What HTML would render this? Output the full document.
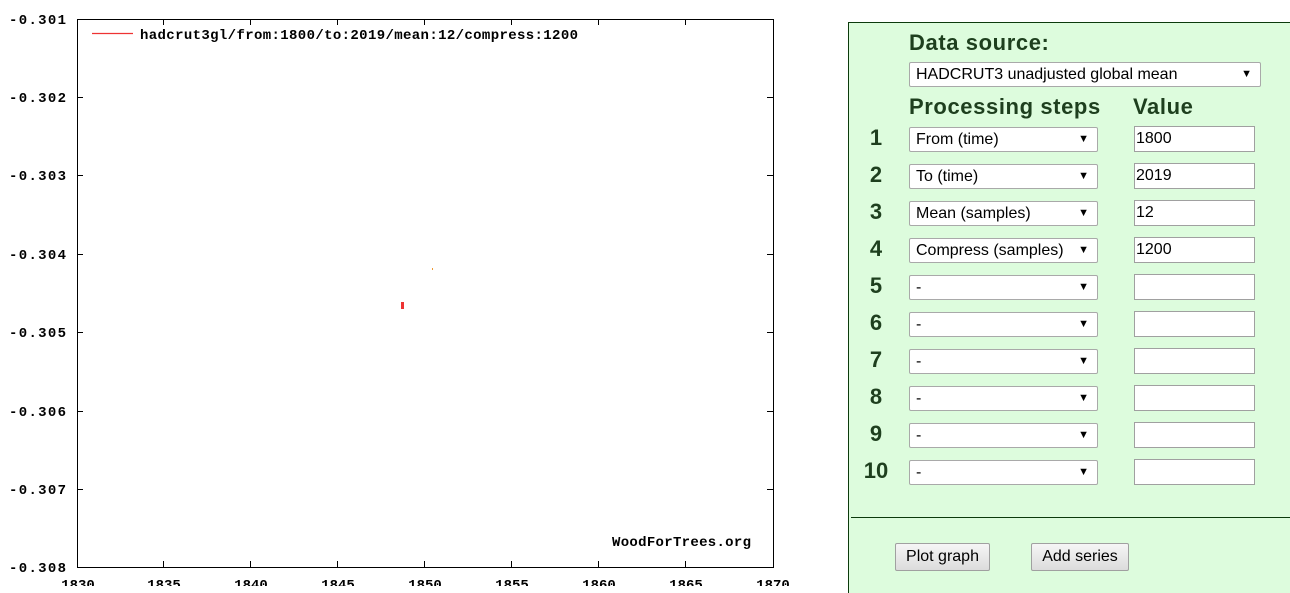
<!DOCTYPE html>
<html><head><meta charset="utf-8"><style>
body{margin:0;width:1290px;height:586px;overflow:hidden;background:#fff;position:relative;font-family:"Liberation Sans",Arial,sans-serif}
.panel{position:absolute;left:848px;top:22px;width:442px;height:570px;background:#ddfcdd;border-left:1px solid #0c3a0c;border-top:1px solid #0c3a0c}
.h{position:absolute;font-weight:bold;font-size:22px;letter-spacing:0.6px;color:#1e3f1e}
.n{position:absolute;width:40px;text-align:center;font-weight:bold;font-size:22px;color:#1e3f1e;left:856px}
.sel{position:absolute;left:909px;width:189px;height:25px;background:#fff;border:1px solid #a9a9a9;border-radius:2px;font-size:16px;line-height:23px;padding-left:6px;box-sizing:border-box;color:#000}
.sel:after{content:"▼";position:absolute;right:8px;top:0;font-size:11px}
.inp{position:absolute;left:1134px;width:118px;height:24px;background:#fff;border:1px solid #a0a0a0;font-size:16px;line-height:24px;padding-left:1px}
.btn{position:absolute;top:543px;height:26px;background:linear-gradient(#f6f6f6,#dcdcdc);border:1px solid #a0a0a0;border-radius:2px;font-size:16px;line-height:26px;text-align:center}
</style></head><body>
<svg width="840" height="586" style="position:absolute;left:0;top:0" font-family="Liberation Mono,monospace" font-weight="bold" font-size="14">
<rect x="77.5" y="19.5" width="696" height="548" fill="none" stroke="#000" stroke-width="1"/>
<g stroke="#000">
<line x1="77" y1="97.5" x2="83" y2="97.5"/><line x1="767" y1="97.5" x2="773" y2="97.5"/>
<line x1="77" y1="175.5" x2="83" y2="175.5"/><line x1="767" y1="175.5" x2="773" y2="175.5"/>
<line x1="77" y1="254.5" x2="83" y2="254.5"/><line x1="767" y1="254.5" x2="773" y2="254.5"/>
<line x1="77" y1="332.5" x2="83" y2="332.5"/><line x1="767" y1="332.5" x2="773" y2="332.5"/>
<line x1="77" y1="411.5" x2="83" y2="411.5"/><line x1="767" y1="411.5" x2="773" y2="411.5"/>
<line x1="77" y1="489.5" x2="83" y2="489.5"/><line x1="767" y1="489.5" x2="773" y2="489.5"/>
<line x1="163.5" y1="19" x2="163.5" y2="25"/><line x1="163.5" y1="561" x2="163.5" y2="567"/>
<line x1="250.5" y1="19" x2="250.5" y2="25"/><line x1="250.5" y1="561" x2="250.5" y2="567"/>
<line x1="337.5" y1="19" x2="337.5" y2="25"/><line x1="337.5" y1="561" x2="337.5" y2="567"/>
<line x1="424.5" y1="19" x2="424.5" y2="25"/><line x1="424.5" y1="561" x2="424.5" y2="567"/>
<line x1="511.5" y1="19" x2="511.5" y2="25"/><line x1="511.5" y1="561" x2="511.5" y2="567"/>
<line x1="598.5" y1="19" x2="598.5" y2="25"/><line x1="598.5" y1="561" x2="598.5" y2="567"/>
<line x1="685.5" y1="19" x2="685.5" y2="25"/><line x1="685.5" y1="561" x2="685.5" y2="567"/>
</g>
<g>
<text x="9" y="24" textLength="57">-0.301</text><text x="9" y="102" textLength="57">-0.302</text><text x="9" y="180" textLength="57">-0.303</text><text x="9" y="259" textLength="57">-0.304</text><text x="9" y="337" textLength="57">-0.305</text><text x="9" y="416" textLength="57">-0.306</text><text x="9" y="494" textLength="57">-0.307</text><text x="9" y="572" textLength="57">-0.308</text>
</g>
<g text-anchor="middle">
<text x="78" y="589">1830</text><text x="164" y="589">1835</text><text x="251" y="589">1840</text><text x="338" y="589">1845</text><text x="425" y="589">1850</text><text x="512" y="589">1855</text><text x="599" y="589">1860</text><text x="686" y="589">1865</text><text x="773" y="589">1870</text>
</g>
<line x1="92" y1="33.5" x2="133" y2="33.5" stroke="#e33" stroke-width="1.2"/>
<text x="140" y="39" textLength="438">hadcrut3gl/from:1800/to:2019/mean:12/compress:1200</text>
<text x="612" y="546" textLength="139">WoodForTrees.org</text>
<rect x="401" y="302" width="3" height="7" fill="#e33"/>
<rect x="432" y="268" width="1" height="2" fill="#e93"/>
</svg>
<div class="panel"></div>
<div class="h" style="left:909px;top:30px">Data source:</div>
<div class="sel" style="top:62px;width:352px">HADCRUT3 unadjusted global mean</div>
<div class="h" style="left:909px;top:94px">Processing steps</div>
<div class="h" style="left:1133px;top:94px">Value</div>
<div class="n" style="top:125px">1</div><div class="sel" style="top:127px">From (time)</div><div class="inp" style="top:126px">1800</div>
<div class="n" style="top:162px">2</div><div class="sel" style="top:164px">To (time)</div><div class="inp" style="top:163px">2019</div>
<div class="n" style="top:199px">3</div><div class="sel" style="top:201px">Mean (samples)</div><div class="inp" style="top:200px">12</div>
<div class="n" style="top:236px">4</div><div class="sel" style="top:238px">Compress (samples)</div><div class="inp" style="top:237px">1200</div>
<div class="n" style="top:273px">5</div><div class="sel" style="top:275px">-</div><div class="inp" style="top:274px"></div>
<div class="n" style="top:310px">6</div><div class="sel" style="top:312px">-</div><div class="inp" style="top:311px"></div>
<div class="n" style="top:347px">7</div><div class="sel" style="top:349px">-</div><div class="inp" style="top:348px"></div>
<div class="n" style="top:384px">8</div><div class="sel" style="top:386px">-</div><div class="inp" style="top:385px"></div>
<div class="n" style="top:421px">9</div><div class="sel" style="top:423px">-</div><div class="inp" style="top:422px"></div>
<div class="n" style="top:458px">10</div><div class="sel" style="top:460px">-</div><div class="inp" style="top:459px"></div>
<div style="position:absolute;left:851px;top:517px;width:439px;height:1px;background:#0c3a0c"></div>
<div class="btn" style="left:895px;width:93px">Plot graph</div>
<div class="btn" style="left:1031px;width:96px">Add series</div>
</body></html>
